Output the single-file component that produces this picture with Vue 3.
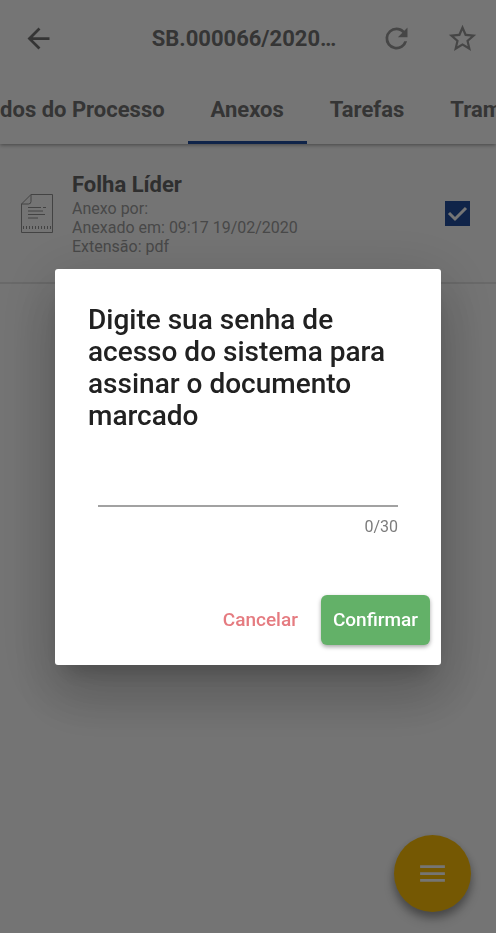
<script setup>
import { nextTick, onMounted, ref } from 'vue'

const tabs = ['Dados do Processo', 'Anexos', 'Tarefas', 'Tramitações']
const active = ref('Anexos')
const strip = ref(null)
const checked = ref(true)
const password = ref('')
const limit = 30

function centerActive() {
  const el = strip.value.querySelector('.active')
  strip.value.scrollLeft =
    el.offsetLeft - strip.value.offsetLeft - (strip.value.clientWidth - el.offsetWidth) / 2
}

async function select(tab) {
  active.value = tab
  await nextTick()
  centerActive()
}

onMounted(async () => {
  centerActive()
  await document.fonts.ready
  centerActive()
})
</script>

<template>
  <div class="screen">
    <header class="top">
      <div class="bar">
        <button class="icon dark" type="button" aria-label="Voltar">
          <svg viewBox="0 0 24 24"><path d="M20 11H7.83l5.59-5.59L12 4l-8 8 8 8 1.41-1.41L7.83 13H20z" /></svg>
        </button>
        <h1>SB.000066/2020…</h1>
        <button class="icon" type="button" aria-label="Atualizar">
          <svg viewBox="0 0 24 24"><path d="M17.65 6.35A7.96 7.96 0 0 0 12 4a8 8 0 1 0 7.73 10h-2.08A6 6 0 1 1 12 6c1.66 0 3.14.69 4.22 1.78L13 11h7V4z" /></svg>
        </button>
        <button class="icon" type="button" aria-label="Favoritar">
          <svg viewBox="0 0 24 24"><path d="M22 9.24l-7.19-.62L12 2 9.19 8.63 2 9.24l5.46 4.73L5.82 21 12 17.27 18.18 21l-1.63-7.03zM12 15.4l-3.76 2.27 1-4.28-3.32-2.88 4.38-.38L12 6.1l1.71 4.04 4.38.38-3.32 2.88 1 4.28z" /></svg>
        </button>
      </div>
      <nav ref="strip" class="tabs">
        <button
          v-for="tab in tabs"
          :key="tab"
          type="button"
          :class="{ active: tab === active }"
          @click="select(tab)"
        >{{ tab }}</button>
      </nav>
    </header>

    <main>
      <article class="item">
        <svg class="file" viewBox="0 0 32 39" fill="none" stroke="currentColor">
          <path d="M10 .5H31.5V38.500H.5V10L10 .5V7.500Q10 10 7.500 10H.5" />
          <path d="M7 13.500H20M22 13.500H25M7 17H22M7 20.500H24M7 24H17" />
          <path d="M2 33.500H30" stroke-width="3" stroke-dasharray="1 2" />
        </svg>
        <div class="info">
          <h2>Folha Líder</h2>
          <p>Anexo por:</p>
          <p>Anexado em: 09:17 19/02/2020</p>
          <p>Extensão: pdf</p>
        </div>
        <label class="check">
          <input v-model="checked" type="checkbox" aria-label="Selecionar Folha Líder" />
          <svg v-if="checked" viewBox="0 0 25 25" fill="none"><path d="M4 12l6 6L21 7" /></svg>
        </label>
      </article>
    </main>

    <button class="fab" type="button" aria-label="Menu">
      <svg viewBox="0 0 24 24"><path d="M3 18h18v-2H3zm0-5h18v-2H3zm0-7v2h18V6z" /></svg>
    </button>

    <div class="scrim">
      <form class="dialog" role="dialog" aria-modal="true" aria-labelledby="prompt" @submit.prevent>
        <label id="prompt" class="prompt" for="password">Digite sua senha de acesso do sistema para assinar o documento marcado</label>
        <div class="field">
          <input id="password" v-model="password" type="password" :maxlength="limit" autocomplete="off" />
          <span>{{ password.length }}/{{ limit }}</span>
        </div>
        <div class="actions">
          <button class="cancel" type="button">Cancelar</button>
          <button class="confirm" type="submit">Confirmar</button>
        </div>
      </form>
    </div>
  </div>
</template>

<style>
body {
  background: #fdfdfd;
}
</style>

<style scoped>
.screen {
  min-height: 100vh;
  font-family: Roboto, "Liberation Sans", sans-serif;
  color: #757575;
}
.screen * {
  box-sizing: border-box;
}
h1, h2, p {
  margin: 0;
}
button {
  border: 0;
  padding: 0;
  background: none;
  font: inherit;
  color: inherit;
  cursor: pointer;
}
.top {
  background: #ffffff;
  box-shadow: 0 1px 4px rgba(0, 0, 0, 0.4);
}
.bar {
  display: flex;
  align-items: center;
  height: 77px;
  padding-right: 1px;
}
.bar h1 {
  flex: 1;
  padding-left: 48px;
  text-align: center;
  font-size: 22px;
  font-weight: 700;
  white-space: nowrap;
}
.icon {
  display: grid;
  place-items: center;
  width: 66px;
  height: 66px;
  color: #9a9a9a;
}
.icon.dark {
  width: 77px;
  color: #757575;
}
.icon svg,
.fab svg {
  width: 33px;
  height: 33px;
  fill: currentColor;
}
.tabs {
  display: flex;
  overflow-x: auto;
  scrollbar-width: none;
}
.tabs button {
  flex: none;
  height: 67px;
  padding: 0 23px;
  border-bottom: 3px solid transparent;
  font-size: 22px;
  font-weight: 700;
}
.tabs .active {
  border-color: #24509f;
}
.item {
  display: flex;
  align-items: center;
  gap: 19px;
  padding: 27px 26px 26px 21px;
  border-bottom: 2px solid #e4e4e4;
}
.file {
  width: 32px;
  height: 39px;
  color: #929292;
}
.info {
  flex: 1;
  font-size: 16px;
  line-height: 19px;
  color: #9e9e9e;
}
.info h2 {
  font-size: 22px;
  line-height: 28px;
  font-weight: 700;
  color: #666666;
}
.check {
  display: grid;
  width: 25px;
  height: 25px;
}
.check input,
.check svg {
  grid-area: 1 / 1;
  width: 25px;
  height: 25px;
  margin: 0;
}
.check input {
  appearance: none;
  border: 3px solid #24509f;
}
.check input:checked {
  background: #24509f;
}
.check svg {
  pointer-events: none;
  stroke: #ffffff;
  stroke-width: 3;
}
.fab {
  position: fixed;
  right: 25px;
  bottom: 21px;
  display: grid;
  place-items: center;
  width: 77px;
  height: 77px;
  border-radius: 50%;
  background: #ffc107;
  color: #ffffff;
  box-shadow: 0 5px 8px rgba(0, 0, 0, 0.3), 0 8px 14px rgba(0, 0, 0, 0.16);
}
.scrim {
  position: fixed;
  inset: 0;
  display: flex;
  align-items: center;
  padding: 0 55px;
  background: rgba(0, 0, 0, 0.54);
}
.dialog {
  flex: 1;
  border-radius: 3px;
  background: #ffffff;
  box-shadow: 0 15px 21px -10px rgba(0, 0, 0, 0.2), 0 33px 52px 4px rgba(0, 0, 0, 0.14), 0 12px 63px 11px rgba(0, 0, 0, 0.12);
}
.prompt {
  display: block;
  padding: 35px 33px 0;
  font-size: 28px;
  line-height: 32px;
  font-weight: 500;
  color: #212121;
}
.field {
  display: flex;
  flex-direction: column;
  padding: 32px 43px 0;
}
.field input {
  width: 100%;
  height: 43px;
  padding: 0;
  border: 0;
  border-bottom: 2px solid #a2a2a2;
  border-radius: 0;
  outline: 0;
  background: none;
  font: 22px Roboto, "Liberation Sans", sans-serif;
  color: #212121;
}
.field span {
  padding-top: 10px;
  text-align: right;
  font-size: 16px;
  line-height: 20px;
  color: #7c7c7c;
}
.actions {
  display: flex;
  justify-content: flex-end;
  gap: 11px;
  padding: 58px 11px 20px;
  font-size: 19px;
  font-weight: 500;
}
.actions button {
  height: 50px;
  padding: 0 12px;
  border-radius: 6px;
}
.actions .cancel {
  color: #e57b80;
}
.actions .confirm {
  background: #63b168;
  color: #ffffff;
  box-shadow: 0 2px 4px rgba(0, 0, 0, 0.35);
}
</style>
